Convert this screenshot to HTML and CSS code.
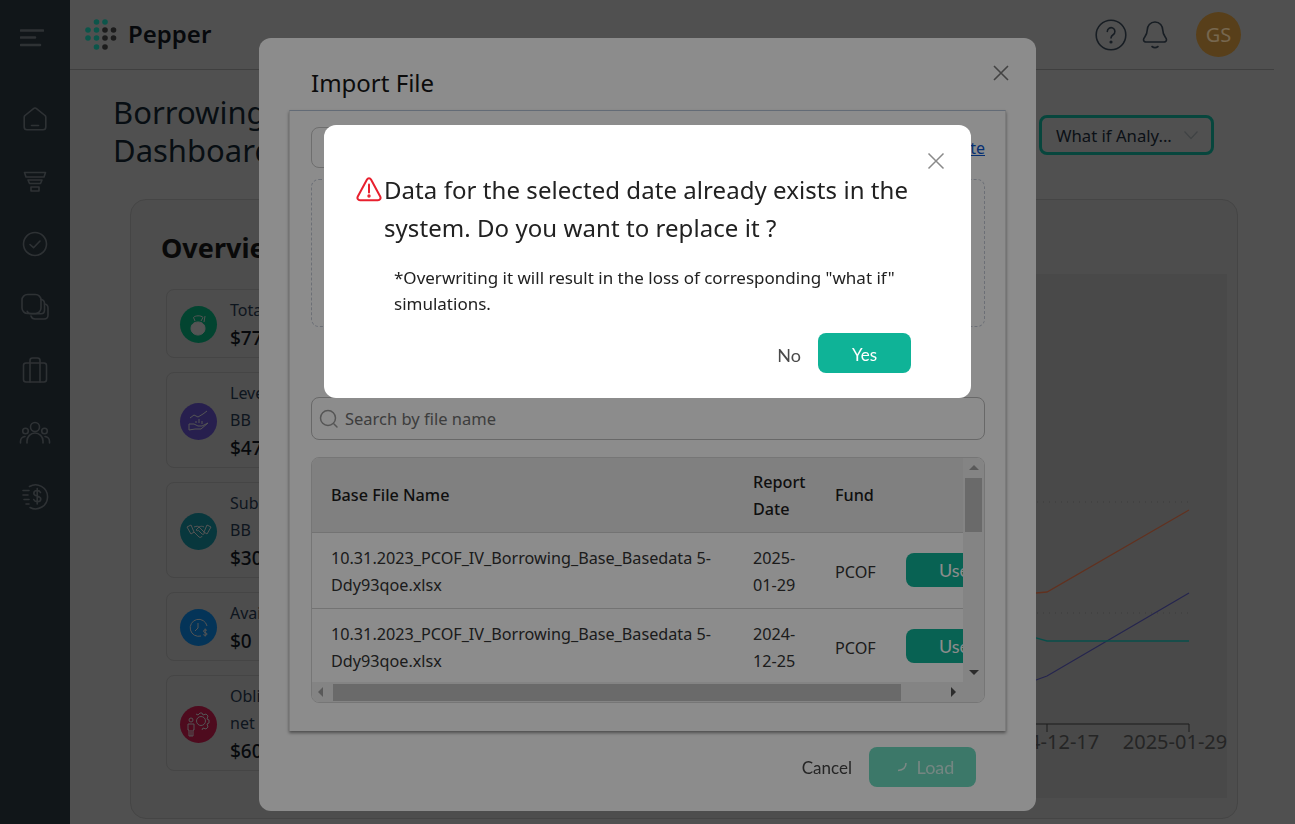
FILE: index.html
```html
<!DOCTYPE html>
<html lang="en">
<head>
  <meta charset="UTF-8">
  <title>Pepper - Borrowing Base Dashboard</title>
  <meta name="viewport" content="width=device-width, initial-scale=1.0">
  <link rel="stylesheet" href="styles.css">
</head>
<body>
  <div class="app">
    <aside class="sidebar">
      <svg class="menu-icon" width="24" height="18" viewBox="0 0 24 18"><path d="M1 1.500h22M1 8.500h14M1 16h19"/></svg>
      <nav class="side-nav">
        <svg width="30" height="30" viewBox="0 0 30 30"><path d="M5 12.500 13.200 5.800a2.800 2.800 0 0 1 3.600 0L25 12.500a2 2 0 0 1 .8 1.600V24a2.800 2.800 0 0 1-2.800 2.800H7A2.800 2.800 0 0 1 4.200 24V14.100a2 2 0 0 1 .8-1.600Z"/><path d="M11.500 22.500h7"/></svg>
        <svg width="30" height="30" viewBox="0 0 30 30"><path d="M4.500 6.500h21l-1.500 4.500H6ZM8 14h14l-1.500 3.500h-11ZM11 21h8v4h-8Z"/></svg>
        <svg width="30" height="30" viewBox="0 0 30 30"><circle cx="15" cy="15" r="11.500"/><path d="m10 15.500 3.500 3.200 6.500-6.700"/></svg>
        <svg width="30" height="30" viewBox="0 0 30 30"><rect x="2" y="2.500" width="19" height="19" rx="5.500"/><path d="M21 7.500c2 .3 3.500 1.800 3.500 4v6.500c0 2.300-1.500 3.800-3.500 3.800H11c-2 0-3.300-1-3.800-2.500"/><path d="M24.500 12c2 .3 3.500 1.800 3.500 4v7c0 2.500-1.500 4-4 4H15c-2.200 0-3.500-1.300-4-3"/></svg>
        <svg width="30" height="30" viewBox="0 0 30 30"><rect x="3.500" y="8" width="23" height="19" rx="2.500"/><path d="M10 8V5.500A2.500 2.500 0 0 1 12.500 3h5A2.500 2.500 0 0 1 20 5.500V8M10 8v19M20 8v19"/></svg>
        <svg width="32" height="30" viewBox="0 0 32 30"><circle cx="16" cy="9" r="4.500"/><circle cx="6.500" cy="13" r="2.800"/><circle cx="25.500" cy="13" r="2.800"/><path d="M8 25v-2a8 8 0 0 1 16 0v2M1.500 25v-1.500a5 5 0 0 1 4.500-5M30.500 25v-1.500a5 5 0 0 0-4.500-5"/></svg>
        <svg width="30" height="30" viewBox="0 0 30 30"><path d="M9.500 5.500A12 12 0 1 1 10 26.500"/><path d="M3 9.500h6M3 14h5M4 18.500h5M6 23h3"/><path d="M20.500 11.500c-.6-1.300-1.800-2-3.300-2-2 0-3.400 1.100-3.400 2.800 0 3.900 7 1.900 7 5.600 0 1.700-1.500 2.700-3.500 2.700-1.700 0-3-.8-3.600-2.100M17.200 7.500v15.500"/></svg>
      </nav>
    </aside>

    <div class="content">
      <header class="topbar">
        <div class="brand">
          <svg width="32" height="32" viewBox="0 0 32 32">
            <g class="dot-teal"><circle cx="11.500" cy="3" r="2.800"/><circle cx="20" cy="3" r="2.800"/><circle cx="3" cy="11" r="2.800"/><circle cx="11.500" cy="11" r="2.800"/><circle cx="3" cy="19" r="2.800"/><circle cx="11.500" cy="19" r="2.800"/><circle cx="11.500" cy="28" r="2.800"/></g>
            <g class="dot-dark"><circle cx="20" cy="11" r="2.800"/><circle cx="28.500" cy="11" r="2.800"/><circle cx="20" cy="19" r="2.800"/><circle cx="28.500" cy="19" r="2.800"/><circle cx="20" cy="28" r="2.800"/></g>
          </svg>
          <span class="brand-name">Pepper</span>
        </div>
        <div class="top-actions">
          <svg class="top-icon" width="32" height="32" viewBox="0 0 32 32"><circle cx="16" cy="16" r="14.800"/><path d="M12.300 12.500a3.800 3.800 0 1 1 5.800 3.200c-1.300.8-2.100 1.600-2.100 3.300"/><circle class="filled" cx="16" cy="23" r=".8"/></svg>
          <svg class="top-icon" width="26" height="30" viewBox="0 0 26 30"><path d="M13 2c-4.800 0-7.800 3.700-7.800 8.300 0 5.500-3.700 7-3.700 9.400 0 1.500 1.200 2.300 3 2.300h17c1.800 0 3-.8 3-2.300 0-2.400-3.700-3.900-3.700-9.400C20.800 5.700 17.800 2 13 2Z"/><path d="M10 26.500c1.800 1.400 4.200 1.400 6 0"/></svg>
          <div class="avatar">GS</div>
        </div>
      </header>

      <main class="page">
        <div class="page-head">
          <h1 class="page-title">Borrowing Base<br>Dashboard</h1>
          <div class="what-if">
            <span>What if Analy...</span>
            <svg width="16" height="10" viewBox="0 0 16 10"><path d="m1.500 1.500 6.500 7 6.500-7"/></svg>
          </div>
        </div>

        <section class="overview">
          <div class="overview-left">
            <h2 class="overview-title">Overview</h2>
            <div class="stat">
              <div class="stat-icon green">
                <svg width="24" height="24" viewBox="0 0 24 24"><path class="solid" d="M11 9c4.500 0 7 3 7 6.500S15 22 11 22s-7-3-7-6.500S6.500 9 11 9Z"/><path d="M8 8 6.500 4.500C8 2.500 14 2 16 4.500L14 8M18 3l-1 6"/></svg>
              </div>
              <div class="stat-text"><div>Total</div><b>$77</b></div>
            </div>
            <div class="stat">
              <div class="stat-icon purple">
                <svg width="24" height="24" viewBox="0 0 24 24"><path d="M3 9l4-3 4 2 5-3 4-3M2 15h5l4 2h4l6-3-7 6H8l-6 1ZM9 14v-2M12 14v-4M15 15v-3"/></svg>
              </div>
              <div class="stat-text"><div>Leverage<br>BB</div><b>$47</b></div>
            </div>
            <div class="stat">
              <div class="stat-icon teal">
                <svg width="26" height="24" viewBox="0 0 26 24"><path d="M1 8l4-2 3 7-3 2ZM25 8l-4-2-3 7 3 2ZM8 8c3-1 4-1 5 0l5 5c1 2-1 3-2 2l-3-3M18 8c-2-1-3-1-5 0l-3 3c1 1 2 1 3 0M8 13l5 5c1 1 3 0 3-1"/></svg>
              </div>
              <div class="stat-text"><div>Subscription<br>BB</div><b>$30</b></div>
            </div>
            <div class="stat">
              <div class="stat-icon blue">
                <svg width="24" height="24" viewBox="0 0 24 24"><path d="M14 20A8.500 8.500 0 1 1 20 10"/><path d="M11 7v5l-3 3"/><path d="M20 14.500c-.8-1-3.500-1-3.500.7 0 1.800 3.500 1 3.500 2.800 0 1.700-2.800 1.600-3.700.6M18.200 12.500v8"/></svg>
              </div>
              <div class="stat-text"><div>Available</div><b>$0</b></div>
            </div>
            <div class="stat">
              <div class="stat-icon red">
                <svg width="26" height="26" viewBox="0 0 26 26"><circle cx="5" cy="9" r="2"/><path d="M2 13h6v6H7v6H3v-6H2ZM5 19v6"/><circle cx="15" cy="10" r="4.500"/><path d="M10 3l2 1 2-2h2l1 2 3-1 2 2-1 3 2 1v3l-2 1 1 3-2 2-3-1-1 2"/></svg>
              </div>
              <div class="stat-text"><div>Obligors<br>net</div><b>$60</b></div>
            </div>
          </div>
          <div class="chart">
            <svg width="1000" height="524" viewBox="0 0 1000 524">
              <path class="grid-line" d="M0 228H962M0 339H962"/>
              <path class="line-orange" d="M790 318H809L820 317 962 235"/>
              <path class="line-blue" d="M790 410 809 405 820 401 962 318"/>
              <path class="line-teal" d="M790 357 809 363 820 366H962"/>
              <path class="axis" d="M690 450H962M820 450v8M962 450v8"/>
              <text class="tick" x="820" y="475" text-anchor="middle">2024-12-17</text>
              <text class="tick" x="948" y="475" text-anchor="middle">2025-01-29</text>
            </svg>
          </div>
        </section>
      </main>
    </div>
  </div>

  <!-- import dialog -->
  <div class="layer import-layer">
    <div class="import-modal">
      <div class="import-head">
        <h3 class="import-title">Import File</h3>
        <svg class="close-x" width="18" height="18" viewBox="0 0 18 18"><path d="m2 2 14 14M16 2 2 16"/></svg>
      </div>
      <div class="import-body">
        <div class="file-row">
          <div class="file-input"></div>
          <a class="template-link" href="#">Download template</a>
        </div>
        <div class="dropzone"></div>
        <div class="search-box">
          <svg width="20" height="20" viewBox="0 0 20 20"><circle cx="9" cy="9" r="7.500"/><path d="m15 15 3 3"/></svg>
          <span>Search by file name</span>
        </div>
        <div class="file-table">
          <div class="table-view">
            <table>
              <thead>
                <tr><th class="col-name">Base File Name</th><th class="col-date">Report Date</th><th class="col-fund">Fund</th><th class="col-action"></th></tr>
              </thead>
              <tbody>
                <tr>
                  <td>10.31.2023_PCOF_IV_Borrowing_Base_Basedata 5-Ddy93qoe.xlsx</td>
                  <td>2025-01-29</td>
                  <td>PCOF</td>
                  <td><span class="use-btn">Use</span></td>
                </tr>
                <tr>
                  <td>10.31.2023_PCOF_IV_Borrowing_Base_Basedata 5-Ddy93qoe.xlsx</td>
                  <td>2024-12-25</td>
                  <td>PCOF</td>
                  <td><span class="use-btn">Use</span></td>
                </tr>
              </tbody>
            </table>
          </div>
          <div class="vbar">
            <i class="arrow up"></i>
            <div class="vtrack"><div class="vthumb"></div></div>
            <i class="arrow down"></i>
          </div>
          <div class="hbar">
            <i class="arrow left"></i>
            <div class="htrack"><div class="hthumb"></div></div>
            <i class="arrow right"></i>
          </div>
          <div class="corner"></div>
        </div>
      </div>
      <div class="import-foot">
        <span class="cancel">Cancel</span>
        <span class="load-btn">
          <svg width="14" height="14" viewBox="0 0 14 14"><path d="M11 3c0 4-3 7-8 7.500"/></svg>
          Load
        </span>
      </div>
    </div>
  </div>

  <!-- confirm dialog, sits on its own mask -->
  <div class="layer confirm-layer">
    <div class="confirm-modal">
      <svg class="confirm-close" width="18" height="18" viewBox="0 0 18 18"><path d="m1.500 1.500 15 15M16.500 1.500l-15 15"/></svg>
      <div class="confirm-title">
        <svg width="26" height="26" viewBox="0 0 26 26"><path d="M11 3.500 1.800 20.500C.8 22.300 2 24.300 4 24.300h18c2 0 3.200-2 2.200-3.800L15 3.500c-.9-1.700-3.100-1.700-4 0Z"/><path d="M13 8.500v8"/><circle cx="13" cy="20" r=".7"/></svg>
        <p>Data for the selected date already exists in the system. Do you want to replace it ?</p>
      </div>
      <p class="confirm-note">*Overwriting it will result in the loss of corresponding "what if" simulations.</p>
      <div class="confirm-actions">
        <span class="no-btn">No</span>
        <span class="yes-btn">Yes</span>
      </div>
    </div>
  </div>
</body>
</html>
```

FILE: styles.css
```css
html, body {
  height: 100%;
  margin: 0;
  overflow: hidden;
  font-family: "Noto Sans", sans-serif;
  color: #0f1a24;
}
svg { display: block; fill: none; }

.app {
  display: flex;
  height: 824px;
  background: #939393;
}

/* sidebar */
.sidebar {
  width: 70px;
  flex: none;
  background: #1f282f;
  display: flex;
  flex-direction: column;
  align-items: center;
}
.sidebar svg { stroke: #555b60; stroke-width: 1.600; stroke-linecap: round; stroke-linejoin: round; }
.menu-icon { margin: 29px 0 0 -7px; stroke-width: 2.600 !important; }
.side-nav {
  margin-top: 56px;
  display: flex;
  flex-direction: column;
  gap: 33px;
  align-items: center;
}

/* top bar */
.content { flex: 1; min-width: 0; }
.topbar {
  height: 70px;
  margin-right: 21px;
  box-sizing: border-box;
  border-bottom: 1px solid #747474;
  display: flex;
  align-items: center;
  justify-content: space-between;
  padding: 0 33px 0 15px;
}
.brand { display: flex; align-items: center; gap: 11px; }
.dot-teal { fill: #169b88; }
.dot-dark { fill: #333; }
.brand-name { font-size: 24px; font-weight: 600; line-height: 30px; margin-bottom: 2px; color: #0d1117; }
.top-actions { display: flex; align-items: center; }
.top-icon { stroke: #2a3540; stroke-width: 1.600; stroke-linecap: round; }
.top-icon .filled { fill: #2a3540; }
.top-icon + .top-icon { margin-left: 15px; }
.avatar {
  width: 45px;
  height: 45px;
  margin-left: 28px;
  border-radius: 50%;
  background: #a07430;
  color: #d8bc90;
  font-size: 20px;
  display: flex;
  align-items: center;
  justify-content: center;
}

/* page */
.page { padding: 0 57px 0 60px; }
.page-head {
  display: flex;
  justify-content: space-between;
  align-items: flex-start;
  padding: 23px 24px 0 0;
  margin-left: -17px;
  height: 106px;
}
.page-title { margin: 0; font-size: 31px; font-weight: 400; line-height: 38px; color: #0f1a24; }
.what-if {
  margin-top: 22px;
  width: 175px;
  height: 40px;
  box-sizing: border-box;
  border: 3px solid #0e8070;
  border-radius: 8px;
  display: flex;
  align-items: center;
  gap: 11px;
  padding-left: 14px;
  font-size: 16.700px;
  color: #15202a;
}
.what-if svg { stroke: #74797c; stroke-width: 1.300; }
.overview {
  height: 620px;
  box-sizing: border-box;
  border: 1px solid #7e7e7e;
  border-radius: 16px;
  background: #8c8c8c;
  padding: 28px 0 0 35px;
  display: flex;
  gap: 24px;
}
.overview-left { width: 310px; flex: none; }
.overview-title { margin: 0 0 21px -5px; font-size: 27px; line-height: 40px; font-weight: 700; color: #111; }
.stat {
  display: flex;
  align-items: center;
  gap: 13px;
  padding: 7px 13px 5px;
  margin-bottom: 14px;
  border: 1px solid #7e7e7e;
  border-radius: 8px;
}
.stat-icon {
  width: 37px;
  height: 37px;
  flex: none;
  border-radius: 50%;
  display: flex;
  align-items: center;
  justify-content: center;
}
.stat-icon svg { stroke: #9a9a9a; stroke-width: 1; stroke-linejoin: round; }
.stat-icon .solid { fill: #9a9a9a; }
.green { background: #057d58; }
.purple { background: #483a8e; }
.teal { background: #106470; }
.blue { background: #085fa0; }
.red { background: #8e1438; }
.stat-text { font-size: 16px; line-height: 27px; color: #1a2838; }
.stat-text b { display: block; font-size: 19px; font-weight: 500; line-height: 28px; color: #0d1117; }

/* chart */
.chart {
  flex: 1;
  min-width: 0;
  height: 524px;
  margin-top: 46px;
  margin-right: 10px;
  background: #868686;
  overflow: hidden;
  display: flex;
  justify-content: flex-end;
}
.chart svg { flex: none; }
.grid-line { stroke: #6d6d6d; stroke-dasharray: 1 5; }
.line-orange { stroke: #b05a3a; stroke-width: 1.300; transform: translateY(1px); }
.line-blue { stroke: #44448e; stroke-width: 1.300; transform: translateY(1px); }
.line-teal { stroke: #0f8f88; stroke-width: 1.300; transform: translateY(1px); }
.axis { stroke: #333; }
.tick { fill: #444; font-size: 20px; font-family: "Noto Sans", sans-serif; }

/* dialogs */
.layer {
  position: fixed;
  inset: 0;
  display: flex;
  justify-content: center;
  align-items: flex-start;
}
.import-modal {
  width: 777px;
  height: 773px;
  margin-top: 38px;
  background: #fff;
  border-radius: 12px;
  display: flex;
  flex-direction: column;
}
.import-head {
  height: 72px;
  flex: none;
  display: flex;
  justify-content: space-between;
  padding: 0 26px 0 52px;
}
.import-title { margin: 28px 0 0; font-size: 24px; font-weight: 400; line-height: 34px; color: #161616; }
.close-x { margin-top: 26px; stroke: #7a7a7a; stroke-width: 1.600; }
.import-body {
  margin: 0 30px;
  height: 621px;
  flex: none;
  box-sizing: border-box;
  border-top: 1px solid #b4c4d8;
  border-left: 1px solid #e2e2e2;
  border-right: 1px solid #e2e2e2;
  box-shadow: 0 2px 3px rgba(0,0,0,.45);
  padding: 16px 20px 0 21px;
}
.file-row { display: flex; align-items: center; justify-content: space-between; height: 41px; }
.file-input {
  width: 500px;
  height: 41px;
  box-sizing: border-box;
  border: 1px solid #c8c8c8;
  border-radius: 8px;
}
.template-link { font-size: 16px; color: #0b57d0; }
.dropzone {
  height: 148px;
  margin-top: 11px;
  box-sizing: border-box;
  border: 1px dashed #c5cbd8;
  border-radius: 8px;
}
.search-box {
  height: 43px;
  margin-top: 70px;
  box-sizing: border-box;
  border: 1px solid #bdbdbd;
  border-radius: 8px;
  display: flex;
  align-items: center;
  gap: 6px;
  padding-left: 7px;
  font-size: 16.500px;
  color: #6f6f6f;
}
.search-box svg { stroke: #9c9c9c; stroke-width: 1.500; stroke-linecap: round; }

/* table with its drawn scrollbars */
.file-table {
  margin-top: 17px;
  height: 246px;
  box-sizing: border-box;
  border: 1px solid #d8d8d8;
  border-radius: 8px;
  overflow: hidden;
  display: grid;
  grid-template-columns: 651px 21px;
  grid-template-rows: 224px 20px;
}
.table-view { overflow: hidden; }
table {
  width: 760px;
  table-layout: fixed;
  border-collapse: collapse;
  font-size: 16.200px;
  line-height: 27px;
  color: #333;
}
th {
  height: 74px;
  box-sizing: border-box;
  padding: 2px 16px 0 20px;
  text-align: left;
  font-weight: 500;
  color: #1c1c1c;
  background: #e9e9e9;
  border-bottom: 1px solid #d2d2d2;
}
td {
  height: 76px;
  box-sizing: border-box;
  padding: 4px 12px 0 20px;
  border-bottom: 1px solid #d2d2d2;
}
.col-name { width: 421px; padding-left: 19px; }
td:first-child { padding-left: 19px; }
.col-date { width: 82px; }
.col-fund { width: 71px; }
td:nth-child(2) { padding-right: 10px; }
.use-btn {
  display: flex;
  align-items: center;
  height: 34px;
  width: 95px;
  padding-left: 33px;
  box-sizing: border-box;
  margin-top: -4px;
  border-radius: 8px;
  background: #0fb397;
  color: #fff;
  font-family: Lato, sans-serif;
  font-size: 18px;
}
.vbar, .hbar { background: #f1f1f1; display: flex; }
.vbar { flex-direction: column; align-items: center; }
.hbar { align-items: center; }
.vtrack { flex: 1; width: 17px; padding-top: 1px; }
.vthumb { height: 54px; background: #c1c1c1; }
.htrack { flex: 1; height: 17px; }
.hthumb { width: 568px; height: 17px; background: #c1c1c1; }
.corner { background: #f1f1f1; }
.arrow { width: 0; height: 0; flex: none; border: 5px solid transparent; }
.arrow.up { border-bottom-color: #a3a3a3; border-top-width: 0; margin: 7px 0 7px; }
.arrow.down { border-top-color: #505050; border-bottom-width: 0; margin: 6px 0 7px; }
.arrow.left { border-right-color: #a3a3a3; border-left-width: 0; margin: 0 10px 0 6px; }
.arrow.right { border-left-color: #505050; border-right-width: 0; margin: 0 7px 0 31px; }

.import-foot {
  flex: 1;
  display: flex;
  align-items: center;
  justify-content: flex-end;
  gap: 17px;
  padding: 0 60px 8px 0;
}
.cancel { font-family: Lato, sans-serif; font-size: 17px; color: #444; }
.load-btn {
  width: 107px;
  height: 40px;
  box-sizing: border-box;
  border-radius: 8px;
  background: #6ddabf;
  color: rgba(255,255,255,.7);
  display: flex;
  align-items: center;
  justify-content: center;
  gap: 8px;
  padding-left: 4px;
  font-family: Lato, sans-serif;
  font-size: 18px;
}
.load-btn svg { stroke: rgba(255,255,255,.8); stroke-width: 1.500; }

.confirm-layer { background: rgba(0,0,0,.45); }
.confirm-modal {
  position: relative;
  width: 647px;
  height: 273px;
  margin-top: 125px;
  box-sizing: border-box;
  padding: 46px 60px 0 32px;
  background: #fff;
  border-radius: 12px;
}
.confirm-close { position: absolute; top: 27px; right: 26px; stroke: #8a8a8a; stroke-width: 1.500; }
.confirm-title { display: flex; align-items: flex-start; gap: 2px; }
.confirm-title svg { flex: none; margin-top: 5px; stroke: #e8202e; stroke-width: 2; stroke-linecap: round; stroke-linejoin: round; }
.confirm-title svg circle { fill: #e8202e; }
.confirm-title p { margin: 0; font-size: 24px; letter-spacing: .06px; line-height: 38px; color: #212121; }
.confirm-note { margin: 18px 0 0 38px; font-size: 17px; line-height: 26px; color: #212121; }
.confirm-actions {
  display: flex;
  justify-content: flex-end;
  align-items: center;
  gap: 17px;
  margin: 16px 0 0;
}
.no-btn { font-family: Lato, sans-serif; font-size: 18px; color: #4a4a4a; padding-top: 3px; }
.yes-btn {
  width: 93px;
  height: 40px;
  box-sizing: border-box;
  padding-top: 2px;
  border-radius: 8px;
  background: #0fb397;
  color: #fff;
  font-family: Lato, sans-serif;
  font-size: 17px;
  display: flex;
  align-items: center;
  justify-content: center;
}
```
